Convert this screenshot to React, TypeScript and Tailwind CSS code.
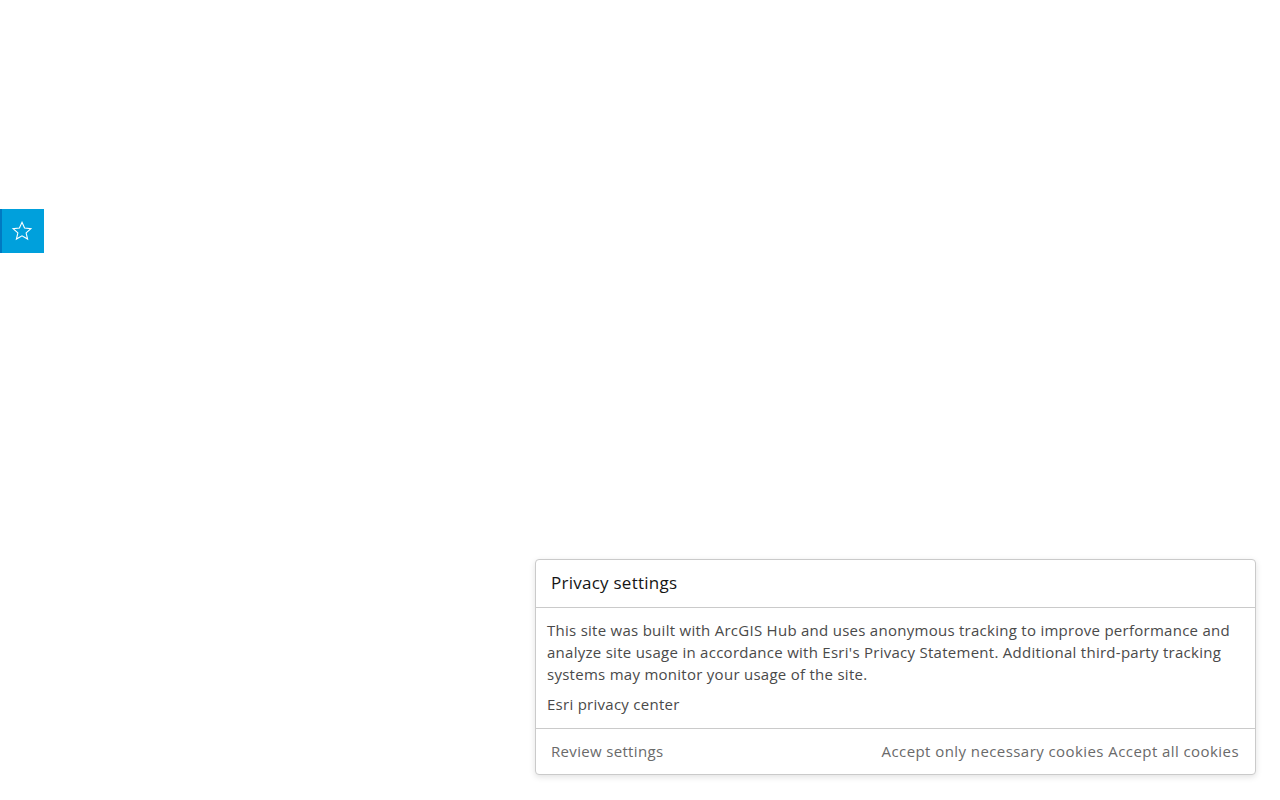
import React from "react";

export default function App() {
  return (
    <div className="relative w-[1280px] h-[800px] bg-white overflow-hidden" style={{ fontFamily: '"Open Sans", "Noto Sans", sans-serif' }}>
      <button className="absolute left-0 top-[209px] w-[44px] h-[44px] bg-[#00a0dc] border-l-[2px] border-[#0079c1] flex items-center justify-center pr-[2px]">
        <svg width="22" height="22" viewBox="0 0 24 24" fill="none" stroke="white" strokeWidth="1.2" strokeLinejoin="miter">
          <path d="M12 2.5l2.8 6.3 6.9.6-5.2 4.6 1.6 6.8L12 17.3l-6.1 3.5 1.6-6.8-5.2-4.6 6.9-.6z" />
        </svg>
      </button>
      <div className="absolute left-[535px] top-[559px] w-[721px] bg-white border border-[#cacaca] rounded-[4px] shadow-[0_2px_6px_rgba(0,0,0,0.12)]">
        <div className="h-[48px] flex items-center px-[15px] border-b border-[#cacaca]">
          <span className="text-[17px] tracking-[0.25px] text-[#151515] -mt-[1px]">Privacy settings</span>
        </div>
        <div className="px-[11px] pt-[11px] pb-[13px] border-b border-[#cacaca] text-[15px] tracking-[0.27px] leading-[22px] text-[#4a4a4a]">
          <p>This site was built with ArcGIS Hub and uses anonymous tracking to improve performance and analyze site usage in accordance with Esri's Privacy Statement. Additional third-party tracking systems may monitor your usage of the site.</p>
          <p className="mt-[8px]">Esri privacy center</p>
        </div>
        <div className="h-[45px] flex items-center justify-between pl-[15px] pr-[16px] text-[15px] text-[#6a6a6a]">
          <span className="tracking-[0.33px]">Review settings</span>
          <span className="tracking-[0.43px]">Accept only necessary cookies Accept all cookies</span>
        </div>
      </div>
    </div>
  );
}
